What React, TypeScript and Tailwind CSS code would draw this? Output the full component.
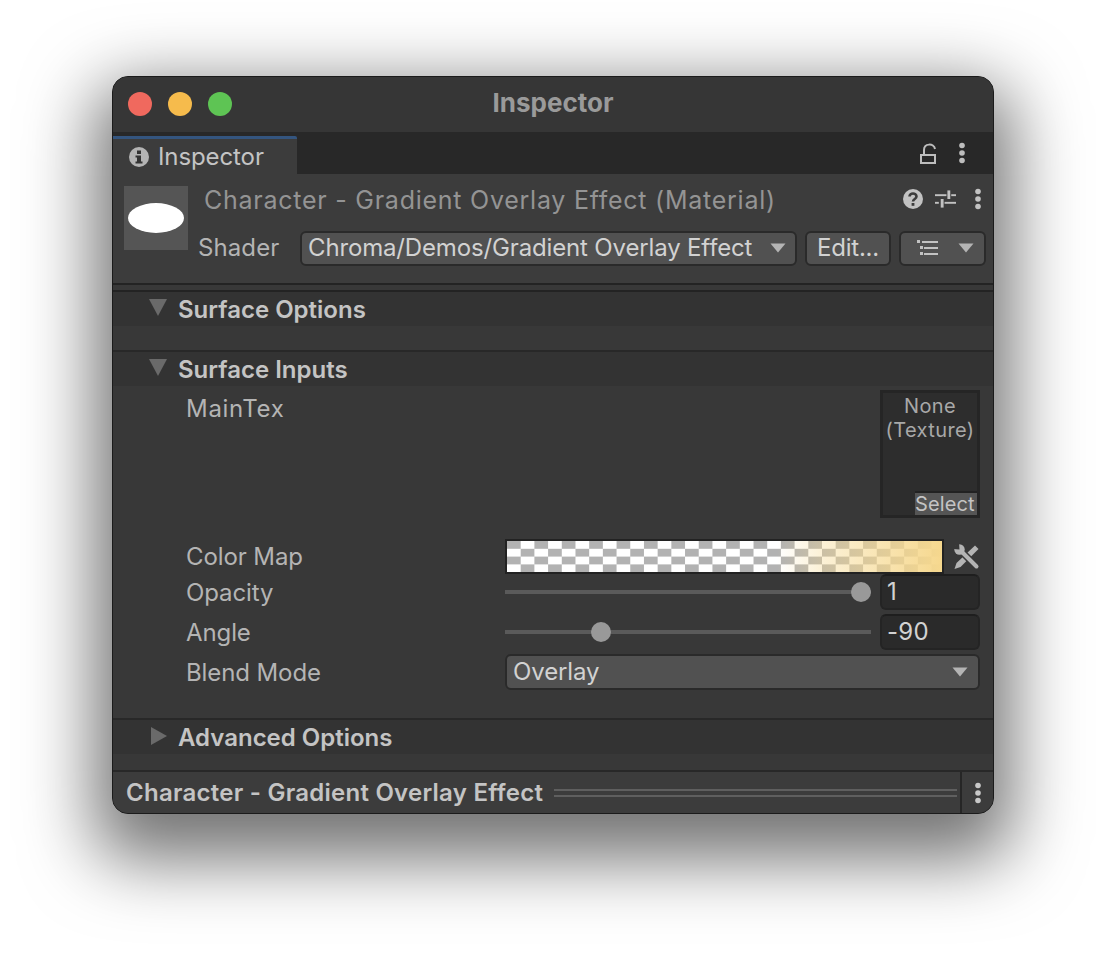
const font = "font-['Inter','Liberation_Sans',sans-serif]";

function Kebab({ className = "" }: { className?: string }) {
  return (
    <svg width="8" height="22" viewBox="0 0 8 22" className={className} fill="currentColor">
      <circle cx="4" cy="3.5" r="2.8" />
      <circle cx="4" cy="11" r="2.8" />
      <circle cx="4" cy="18.5" r="2.8" />
    </svg>
  );
}

function Caret({ className = "" }: { className?: string }) {
  return (
    <svg width="16" height="10" viewBox="0 0 16 10" className={className} fill="currentColor">
      <path d="M0.5 0.5H15.5L8 9.5Z" />
    </svg>
  );
}

function SectionHeader({ title, open = true }: { title: string; open?: boolean }) {
  return (
    <div className="flex h-[34px] items-center bg-[#333333] pl-[36px]">
      <div className="flex w-[29px] shrink-0 justify-start">
        {open ? (
          <svg width="18" height="17" viewBox="0 0 18 17" className="-mt-[3px] text-[#6a6a6a]" fill="currentColor">
            <path d="M0 0H18L9 17Z" />
          </svg>
        ) : (
          <svg width="16" height="18" viewBox="0 0 16 18" className="-mt-[3px] ml-[2px] text-[#6a6a6a]" fill="currentColor">
            <path d="M0 0L16 9L0 18Z" />
          </svg>
        )}
      </div>
      <span className="mt-[2px] text-[24px] font-semibold tracking-[0px] text-[#c4c4c4]">{title}</span>
    </div>
  );
}

function Slider({ percent }: { percent: number }) {
  return (
    <div className="relative h-[20px] w-[366px]">
      <div className="absolute left-0 right-0 top-[8px] h-[4px] bg-[#5a5a5a]" />
      <div
        className="absolute top-0 h-[20px] w-[20px] -translate-x-1/2 rounded-full bg-[#999999]"
        style={{ left: `${percent}%` }}
      />
    </div>
  );
}

function NumberField({ value }: { value: string }) {
  return (
    <div className="flex h-[36px] w-[100px] items-center rounded-[6px] border-2 border-[#242424] border-t-[#1e1e1e] bg-[#2a2a2a] pl-[5px] text-[24px] tracking-[0.25px] text-[#d2d2d2]">
      {value}
    </div>
  );
}

export default function App() {
  return (
    <div className={`h-[962px] w-[1106px] overflow-hidden bg-white pl-[112px] pt-[76px] ${font}`}>
      <div className="flex h-[738px] w-[882px] flex-col overflow-hidden rounded-[16px] border border-[#1b1b1b] bg-[#383838] shadow-[0_28px_70px_18px_rgba(0,0,0,0.55)]">
        {/* Title bar */}
        <div className="relative flex h-[55px] shrink-0 items-center justify-center bg-[#363636]">
          <div className="absolute left-[15px] top-[15px] flex gap-[16px]">
            <div className="h-[24px] w-[24px] rounded-full bg-[#f0695e]" />
            <div className="h-[24px] w-[24px] rounded-full bg-[#f6bb4c]" />
            <div className="h-[24px] w-[24px] rounded-full bg-[#5ec454]" />
          </div>
          <span className="mb-[4px] text-[26px] font-bold text-[#9a9a9a]">Inspector</span>
        </div>

        {/* Tab bar */}
        <div className="flex h-[42px] shrink-0 items-stretch justify-between bg-[#282828]">
          <div className="mt-[4px] flex w-[184px] items-center gap-[9px] rounded-tr-[2px] border-t-[3px] border-[#34557f] bg-[#3c3c3c] pl-[16px]">
            <svg width="20" height="20" viewBox="0 0 20 20">
              <circle cx="10" cy="10" r="10" fill="#b4b4b4" />
              <rect x="8" y="3.5" width="4" height="3.5" fill="#333" />
              <path d="M6.5 8.5H12V14.5H13.5V16.5H6.5V14.5H8V10.5H6.5Z" fill="#333" />
            </svg>
            <span className="text-[24px] tracking-[-0.1px] text-[#c4c4c4]">Inspector</span>
          </div>
          <div className="flex items-center gap-[22px] pr-[27px] text-[#bdbdbd]">
            <svg width="16" height="21" viewBox="0 0 16 21" fill="none" stroke="currentColor" strokeWidth="2">
              <rect x="1" y="12" width="14" height="8" />
              <path d="M4 12V7C4 0 14 0 15 6" />
            </svg>
            <Kebab />
          </div>
        </div>

        {/* Material header */}
        <div className="flex h-[109px] shrink-0 bg-[#3c3c3c] pl-[11px] pt-[12px]">
          <div className="flex h-[64px] w-[64px] shrink-0 items-center justify-center bg-[#555555]">
            <div className="h-[30px] w-[56px] rounded-[50%] bg-white" />
          </div>
          <div className="ml-[10px] flex min-w-0 flex-1 flex-col pr-[7px]">
            <div className="flex h-[44px] items-start justify-between pl-[6px] pr-[4px]">
              <span className="mt-[-4px] text-[25px] tracking-[0.75px] text-[#949494]">
                Character - Gradient Overlay Effect (Material)
              </span>
              <div className="mt-[2px] flex items-center text-[#c2c2c2]">
                <svg width="20" height="20" viewBox="0 0 20 20" className="mr-[12px]">
                  <circle cx="10" cy="10" r="10" fill="currentColor" />
                  <path d="M6.5 7.5C6.5 3.5 13.5 3.5 13.5 7.5C13.5 10 10 10 10 12.5" fill="none" stroke="#3c3c3c" strokeWidth="2.6" />
                  <rect x="8.6" y="14" width="2.8" height="2.8" fill="#3c3c3c" />
                </svg>
                <svg width="21" height="20" viewBox="0 0 22 20" className="mr-[18px]" fill="currentColor">
                  <rect x="0" y="5" width="12" height="2" />
                  <rect x="13" y="1" width="3" height="9" />
                  <rect x="17" y="5" width="5" height="2" />
                  <rect x="0" y="13" width="4" height="2" />
                  <rect x="6" y="10" width="3" height="9" />
                  <rect x="10" y="13" width="12" height="2" />
                </svg>
                <Kebab />
              </div>
            </div>
            <div className="flex items-center">
              <span className="w-[102px] shrink-0 text-[24px] tracking-[0.1px] text-[#b4b4b4]">Shader</span>
              <div className="flex h-[35px] w-[497px] items-center justify-between rounded-[6px] border-2 border-[#2a2a2a] bg-[#515151] pl-[6px] pr-[9px] text-[24px] tracking-[-0.15px] text-[#d2d2d2]">
                <span className="mt-[-1px]">Chroma/Demos/Gradient Overlay Effect</span>
                <Caret className="text-[#b4b4b4]" />
              </div>
              <div className="ml-[8px] flex h-[35px] w-[86px] items-center justify-center rounded-[6px] border-2 border-[#2a2a2a] bg-[#515151] text-[24px] tracking-[-0.2px] text-[#d2d2d2]">
                Edit...
              </div>
              <div className="ml-[8px] flex h-[35px] w-[87px] items-center justify-between rounded-[6px] border-2 border-[#2a2a2a] bg-[#515151] pl-[16px] pr-[10px] text-[#c2c2c2]">
                <svg width="22" height="16" viewBox="0 0 22 16" fill="currentColor">
                  <rect x="0" y="0" width="3" height="3" />
                  <rect x="5" y="1" width="16" height="2" />
                  <rect x="3" y="6" width="3" height="3" />
                  <rect x="7" y="7" width="14" height="2" />
                  <rect x="3" y="12" width="3" height="3" />
                  <rect x="7" y="13" width="14" height="2" />
                </svg>
                <Caret className="text-[#b4b4b4]" />
              </div>
            </div>
          </div>
        </div>

        {/* Surface Options */}
        <div className="h-[9px] shrink-0 border-y-2 border-[#232323] bg-[#383838]" />
        <SectionHeader title="Surface Options" />
        <div className="h-[24px] shrink-0" />

        {/* Surface Inputs */}
        <div className="h-[2px] shrink-0 bg-[#282828]" />
        <SectionHeader title="Surface Inputs" />
        <div className="flex h-[332px] shrink-0 flex-col pl-[73px] pr-[13px] pt-[4px] text-[24px] tracking-[-0.1px] text-[#b4b4b4]">
          <div className="flex h-[128px] items-start justify-between">
            <span className="mt-[1px] tracking-[0.7px]">MainTex</span>
            <div className="relative flex h-[128px] w-[100px] flex-col items-center border-[3px] border-[#252525] bg-[#2d2d2d] pt-[1px] text-[20px] leading-[24px] tracking-[0.4px] text-[#a8a8a8]">
              <span>None</span>
              <span>(Texture)</span>
              <span className="absolute bottom-0 right-0 h-[24px] w-[62px] border-t-2 border-[#222] bg-[#555555] pl-0 leading-[22px] tracking-[0.1px] text-[#c4c4c4]">
                Select
              </span>
            </div>
          </div>
          <div className="mt-[21px] flex h-[35px] items-center">
            <span className="w-[319px] shrink-0">Color Map</span>
            <div className="relative h-[35px] w-[439px] overflow-hidden border-2 border-[#222] bg-[repeating-conic-gradient(#ffffff_0_25%,#b2b2b2_0_50%)] bg-[length:27.4px_15.6px]">
              <div className="absolute inset-0 bg-[linear-gradient(to_right,rgba(246,216,142,0)_62%,rgba(246,216,142,0.35)_72%,rgba(246,216,142,1)_100%)]" />
            </div>
            <svg width="27" height="27" viewBox="0 0 27 27" className="ml-[9px] shrink-0 text-[#b4b4b4]" fill="currentColor">
              <path d="M1.5 26L3.5 20L22 2.5L25.5 6L7.5 24Z" />
              <path d="M8 8L23 23" stroke="#383838" strokeWidth="7" />
              <path d="M8 8L23.5 23.5" stroke="currentColor" strokeWidth="4" strokeLinecap="round" />
              <circle cx="6.5" cy="6.5" r="5.2" />
              <path d="M6.5 6.5L6 -1L-1 6Z" fill="#383838" />
            </svg>
          </div>
          <div className="flex h-[36px] items-center">
            <span className="w-[319px] shrink-0 pt-[2px]">Opacity</span>
            <Slider percent={97.3} />
            <div className="ml-[9px]"><NumberField value="1" /></div>
          </div>
          <div className="mt-[4px] flex h-[36px] items-center">
            <span className="w-[319px] shrink-0 pt-[2px]">Angle</span>
            <Slider percent={26.2} />
            <div className="ml-[9px]"><NumberField value="-90" /></div>
          </div>
          <div className="mt-[4px] flex h-[36px] items-center">
            <span className="w-[319px] shrink-0 pt-[2px]">Blend Mode</span>
            <div className="flex h-[36px] w-[475px] items-center justify-between rounded-[6px] border-2 border-[#2a2a2a] bg-[#515151] pl-[6px] pr-[10px] text-[#d2d2d2]">
              <span>Overlay</span>
              <Caret className="text-[#b4b4b4]" />
            </div>
          </div>
        </div>

        {/* Advanced Options */}
        <div className="h-[2px] shrink-0 bg-[#282828]" />
        <SectionHeader title="Advanced Options" open={false} />
        <div className="h-[16px] shrink-0" />

        {/* Footer */}
        <div className="h-[2px] shrink-0 bg-[#282828]" />
        <div className="flex min-h-0 flex-1 items-center bg-[#3c3c3c] pl-[13px]">
          <span className="whitespace-nowrap text-[24px] font-semibold tracking-[0.25px] text-[#c4c4c4]">
            Character - Gradient Overlay Effect
          </span>
          <div className="ml-[11px] flex w-[403px] shrink-0 flex-col gap-[4px]">
            <div className="h-[2px] bg-[#5f5f5f]" />
            <div className="h-[2px] bg-[#5f5f5f]" />
          </div>
          <div className="ml-[3px] flex h-full w-[34px] shrink-0 items-center justify-center border-l-2 border-[#262626] text-[#c8c8c8]">
            <Kebab />
          </div>
        </div>
      </div>
    </div>
  );
}
